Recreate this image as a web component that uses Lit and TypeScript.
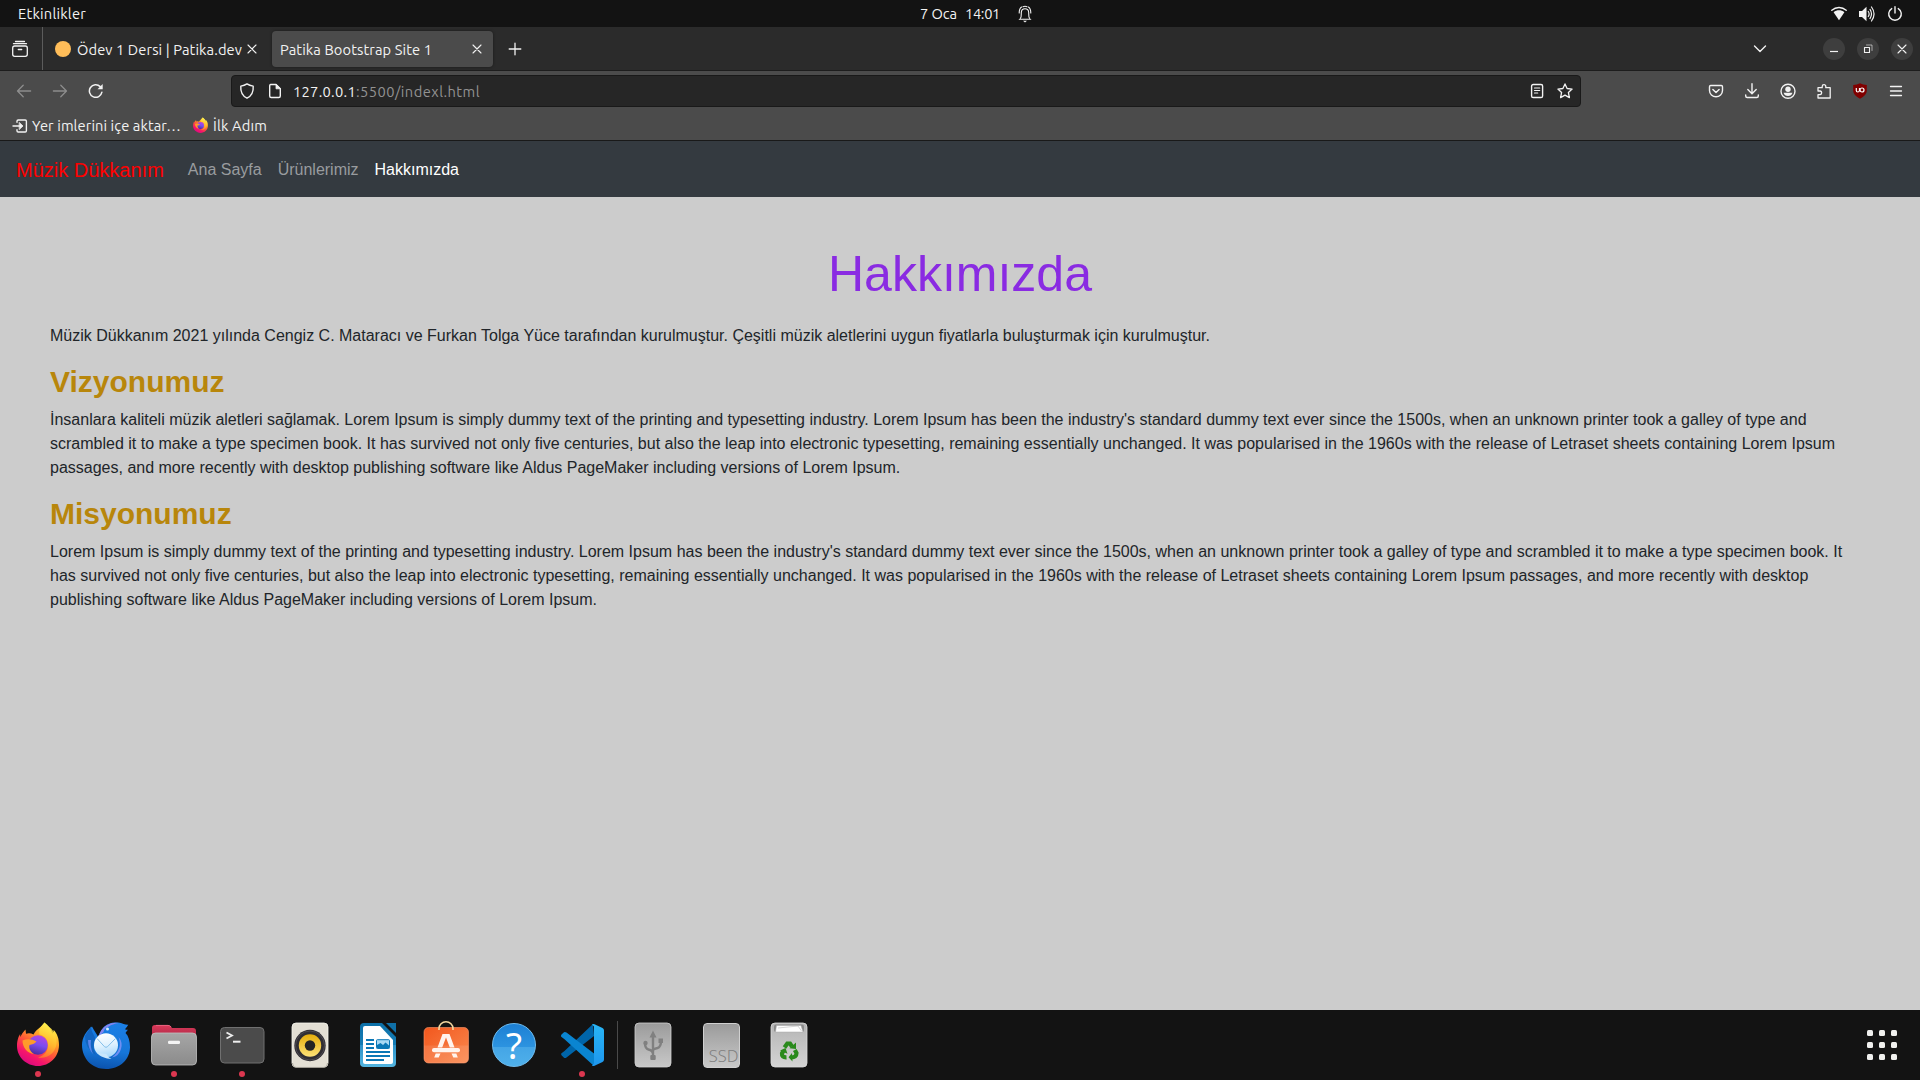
import { LitElement, html, svg, css } from "lit";
import { customElement, property } from "lit/decorators.js";

/* A text label whose tracking is adjusted so that it fills a given width. */
@customElement("fit-label")
class FitLabel extends LitElement {
  @property({ type: Number }) w = 0;
  static styles = css`
    :host { display: inline-block; white-space: pre; flex: none; }
    .t { display: inline-block; }
  `;
  async firstUpdated() {
    await document.fonts.ready;
    const t = this.renderRoot.querySelector(".t") as HTMLElement;
    const n = (this.textContent || "").length;
    const natural = t.getBoundingClientRect().width;
    if (this.w && n) t.style.letterSpacing = (this.w - natural) / n + "px";
  }
  render() { return html`<span class="t"><slot></slot></span>`; }
}

const S = (size: number, body: unknown, vb = "0 0 16 16") =>
  html`<svg width=${size} height=${size} viewBox=${vb} fill="none" stroke="currentColor" stroke-width="1.3" stroke-linecap="round" stroke-linejoin="round">${body}</svg>`;

const I = {
  bell: S(18, svg`<path d="M4.5 13.2C5.5 12 5.2 9.500 5.300 7.500C5.500 4.800 6.800 3.800 9 3.800S12.500 4.800 12.700 7.500C12.800 9.500 12.500 12 13.500 13.200M3.300 14.300H14.700M3.200 8C3.200 5 4 3 5.600 2M14.800 8C14.800 5 14 3 12.400 2M7 1.700Q9 .8 11 1.700" stroke-width="1.1"/><path d="M7 15.700H11L9 17.500Z" fill="currentColor" stroke="none"/>`, "0 0 18 18"),
  wifi: S(16, svg`<path d="M.8 4.300C5 .6 11 .6 15.200 4.300" stroke-width="1.4"/><path d="M2.600 6.300C5.800 3.700 10.200 3.700 13.400 6.300L8 14.300Z" fill="currentColor" stroke="none"/>`),
  volume: S(16, svg`<path d="M0 5H3L7.500 .8V15.200L3 11H0Z" fill="currentColor" stroke="none"/><path d="M9.300 5.500Q11 8 9.300 10.500M11 3.400Q14 8 11 12.600M12.500 1Q17.600 8 12.500 15" stroke-width="1.2"/>`),
  power: S(16, svg`<path d="M4.700 2.600A6.300 6.300 0 1 0 11.300 2.600M8 .8V7" stroke-width="1.4"/>`),
  box: S(18, svg`<rect x="1.700" y="6" width="14.600" height="10.300" rx="2"/><path d="M2.500 3.700H15.500M4.500 1.500H13.500M7.300 9.500H10.700" />`, "0 0 18 18"),
  x: S(10, svg`<path d="M1 1L9 9M9 1L1 9" stroke-width="1.100"/>`, "0 0 10 10"),
  plus: S(14, svg`<path d="M7 1.200V12.800M1.200 7H12.800"/>`, "0 0 14 14"),
  chev: S(14, svg`<path d="M1.500 4L7 9.500L12.500 4" stroke-width="1.400"/>`, "0 0 14 14"),
  min: S(10, svg`<path d="M1 7.500H9" stroke-width="1.200" stroke-linecap="butt"/>`, "0 0 10 10"),
  max: S(10, svg`<rect x="1.500" y="3.500" width="5" height="5" stroke-width="1.100"/><path d="M3.500 1H9V6.500" stroke-width="1" opacity=".6"/>`, "0 0 10 10"),
  back: S(16, svg`<path d="M1.600 8H14.600M7.200 2.300L1.500 8L7.200 13.700"/>`),
  fwd: S(16, svg`<path d="M1.400 8H14.400M8.800 2.300L14.500 8L8.800 13.700"/>`),
  reload: S(16, svg`<path d="M13.900 9.200A6.300 6.300 0 1 1 12.200 3.600" stroke-width="1.500"/><path d="M14.700 1V6.200H9.500Z" fill="currentColor" stroke="none"/>`),
  shield: S(16, svg`<path d="M8 .9Q10.500 2.700 14.200 3.100C14.600 8.500 12.500 13 8 15.200C3.500 13 1.400 8.500 1.800 3.100Q5.500 2.700 8 .9Z" stroke-width="1.400"/>`),
  doc: S(16, svg`<path d="M3.700 1.500H9L13.300 5.800V13Q13.300 14.500 11.800 14.500H4.200Q2.700 14.500 2.700 13V3Q2.700 1.500 3.700 1.500Z" stroke-width="1.400"/><path d="M9 1.500V5.800H13.300Z" fill="currentColor" stroke-width=".8"/>`),
  reader: S(16, svg`<rect x="2.600" y="1.500" width="11" height="13" rx="1.600" stroke-width="1.400"/><path d="M5.500 5H10.700M5.500 7.500H10.700M5.500 10H8.700" stroke-width="1.200"/>`),
  star: S(16, svg`<path d="M8 .9L10.100 5.500L15.100 6.100L11.400 9.500L12.400 14.600L8 12.100L3.600 14.600L4.600 9.500L.9 6.100L5.900 5.500Z" stroke-width="1.300"/>`),
  pocket: S(16, svg`<path d="M2.700 2.500H13.300Q14.500 2.500 14.500 3.700V7.500C14.500 11 11.500 13.700 8 13.700S1.500 11 1.500 7.500V3.700Q1.500 2.500 2.700 2.500Z" stroke-width="1.400"/><path d="M4.900 6.500L8 9.500L11.100 6.500" stroke-width="1.500"/>`),
  down: S(16, svg`<path d="M8 .8V10.500M3.800 6.500L8 10.700L12.200 6.500M1.700 12V13Q1.700 14.500 3.200 14.500H12.800Q14.300 14.500 14.300 13V12" stroke-width="1.400"/>`),
  user: S(16, svg`<circle cx="8" cy="8.300" r="7" stroke-width="1.400"/><circle cx="8" cy="6.200" r="2.700" fill="currentColor" stroke="none"/><path d="M3.600 9.700H12.400Q11.500 13 8 13T3.600 9.700Z" fill="currentColor" stroke="none"/>`),
  puzzle: S(16, svg`<path d="M2 8H4.200A1.900 1.900 0 0 1 4.200 11.700H2V15H14.200V4.700H9.800V3.400A1.800 1.800 0 0 0 6.200 3.400V4.700H2Z" stroke-width="1.300"/>`),
  menu: S(14, svg`<path d="M1.500 2.500H12.500M1.500 7H12.500M1.500 11.500H12.500" stroke-width="1.300"/>`, "0 0 14 14"),
  imp: S(16, svg`<path d="M5 4.300V3.200Q5 2 6.200 2H13.200Q14.400 2 14.400 3.200V12.800Q14.400 14 13.200 14H6.200Q5 14 5 12.800V11.700M1 8H8" stroke-width="1.400"/><path d="M7.500 4.700L11 8L7.500 11.300Z" fill="currentColor" stroke-width=".8"/>`),
};

const ublock = html`<svg width="16" height="16" viewBox="0 0 16 16"><path d="M8 .3Q11 2 14.800 2V8Q14.500 12.500 8 15.700Q1.500 12.500 1.200 8V2Q5 2 8 .3Z" fill="#800000"/><path d="M4.300 5V7.500Q4.300 9 5.800 9T7.500 7.500V5" fill="none" stroke="#fff" stroke-width="1.200"/><circle cx="10" cy="7" r="2" fill="none" stroke="#fff" stroke-width="1.200"/></svg>`;

const firefox = (size: number, id: string) => html`<svg width=${size} height=${size} viewBox="0 0 48 48">
  <defs>
    <linearGradient id="${id}a" x1=".85" y1="0.050" x2=".3" y2="1"><stop offset=".05" stop-color="#fff44f"/><stop offset=".3" stop-color="#ffa928"/><stop offset=".55" stop-color="#ff5a36"/><stop offset=".8" stop-color="#f5156c"/><stop offset="1" stop-color="#d80a80"/></linearGradient>
    <linearGradient id="${id}b" x1=".7" y1="0" x2=".4" y2="1"><stop offset="0" stop-color="#b944e0"/><stop offset=".5" stop-color="#7a4cf0"/><stop offset="1" stop-color="#4b2e9c"/></linearGradient>
    <linearGradient id="${id}c" x1=".6" y1="0" x2=".4" y2="1"><stop offset="0" stop-color="#fff44f"/><stop offset=".6" stop-color="#ffbd2e"/><stop offset="1" stop-color="#ff7a2e"/></linearGradient>
  </defs>
  <path d="M30.500 1.500C34.500 4 37 8 38.300 12.500C39.500 11.500 39.800 10.500 39.500 8.800C43.500 13 45 18 45 24C45 36 35.500 45 24 45S3 36 3 25C3 19 5 14.500 6.200 13L6.300 16C7.500 13.500 9 11 11.500 8.500L12 12.800C14 12 17 12 19.500 13.500C22.500 7.500 27.500 6.500 30.500 1.500Z" fill="url(#${id}a)"/>
  <path d="M30.500 1.500C26.500 5.500 24.500 9 25.500 13.500C31 14.500 34.500 19 34 25C33.500 31 30 34.500 24 36.500C34 38 41 32 42.500 23C43 17 40 10 36.500 7C34 5.500 31.500 4 30.500 1.500Z" fill="url(#${id}c)" opacity=".85"/>
  <circle cx="24" cy="24" r="9.800" fill="url(#${id}b)"/>
  <path d="M8.500 19.500C13 17.500 18 18 22.500 20.500C20.500 23 18 23.500 15.500 24C14.500 27 16.500 31 20 33C13 32.500 8.500 26 8.500 19.500Z" fill="#ff9a2a"/>
</svg>`;

const D = (body: unknown) => html`<svg class="ic" width="48" height="48" viewBox="0 0 48 48">${body}</svg>`;

const thunderbird = D(svg`
  <defs><linearGradient id="tb" x1=".5" y1="0" x2=".4" y2="1"><stop offset="0" stop-color="#1b7fe6"/><stop offset=".6" stop-color="#1676d8"/><stop offset="1" stop-color="#0b52ac"/></linearGradient>
  <linearGradient id="tw" x1=".4" y1="0" x2=".6" y2="1"><stop offset="0" stop-color="#fff"/><stop offset=".5" stop-color="#dff1fe"/><stop offset="1" stop-color="#a6d8fb"/></linearGradient></defs>
  <path d="M10 5.500C4 10 0 17 0 24C0 37 9.500 48 24 48S48 38 48 26C48 20 46.500 15 43.500 12Q45 9.800 46 8.800Q44.500 9 43 8.300Q45 6 46.300 3.800Q44 4 41.500 3C34 0 25 2 21 7C18.500 10.500 17.500 13 16 16C15 13 12 10 10 5.500Z" fill="url(#tb)"/>
  <path d="M3 15L9 5.500C9 12 14 15 13 19Q9.500 26 14 34Q3 28 3 15Z" fill="#1264c0"/>
  <path d="M6 19Q6 28 11 33Q8 26 9 19Z" fill="#5a86ec"/>
  <path d="M16.500 16Q18 8 25 4Q31 .8 37 2Q30 3 27 5.500Q22 7 21.500 11Q19 13 16.500 16Z" fill="#8485f0"/>
  <path d="M36.500 16Q41 28 30 36.500Q37 35 39 28T36.500 16Z" fill="#6f8ff2"/>
  <circle cx="24" cy="24.300" r="12" fill="url(#tw)"/><path d="M15 17.500L22.500 25.700Q24 27 25.500 25.700L33.500 17.500" fill="none" stroke="#83bfea" stroke-width="1"/>
  <path d="M16 32Q20 37.500 29.500 38Q25.500 36 24.500 33Z" fill="#c9e7fd"/><circle cx="25.500" cy="8" r="1.500" fill="#d5efff"/>`);

const files = D(svg`
  <defs><linearGradient id="fg" x1="0" y1="0" x2="0" y2="1"><stop offset="0" stop-color="#a6a6a6"/><stop offset="1" stop-color="#8b8b8b"/></linearGradient><linearGradient id="fr" x1="0" y1="0" x2="0" y2="1"><stop offset="0" stop-color="#dc3a5b"/><stop offset="1" stop-color="#8f1f38"/></linearGradient></defs>
  <path d="M2 22V7Q2 4 5 4H18Q20 4 21 5.500L22 7H43Q46 7 46 10V24Z" fill="url(#fr)"/>
  <path d="M6 4.400H18Q20 4.400 21 6" fill="none" stroke="#ed7089" stroke-width=".8"/>
  <rect x="1.500" y="12" width="45" height="32" rx="4" fill="url(#fg)" stroke="#c2c2c2" stroke-width=".8"/><rect x="18" y="19.800" width="12" height="3.200" rx="1.200" fill="#f3f3f3"/>`);
const terminal = D(svg`<rect x="2.500" y="6.500" width="43.500" height="35.500" rx="4" fill="#4b4b4b" stroke="#707070"/><path d="M8.500 11.500L14 14.500L8.500 17.500" fill="none" stroke="#eee" stroke-width="1.800"/><path d="M15 20.700H22.500" stroke="#eee" stroke-width="2"/>`);
const speaker = D(svg`
  <defs><linearGradient id="sy" x1="0" y1="0" x2="0" y2="1"><stop offset="0" stop-color="#e5ad0b"/><stop offset="1" stop-color="#fde277"/></linearGradient></defs>
  <rect x="6" y="2" width="36" height="44" rx="4" fill="#e3dfd4" stroke="#f7f6ef" stroke-width=".8"/><path d="M6.500 42Q7 46.300 10 46.300H38Q41 46.300 41.500 42" fill="none" stroke="#aaa69b"/>
  <circle cx="24" cy="24.500" r="15.700" fill="#302e33"/><circle cx="24" cy="24.500" r="14.500" fill="none" stroke="#5a5860" stroke-width=".7"/><circle cx="24" cy="24.500" r="11.200" fill="url(#sy)"/><circle cx="24" cy="24.500" r="5.200" fill="#242424"/>`);
const writer = D(svg`
  <defs><linearGradient id="wb" x1="0" y1="0" x2="0" y2="1"><stop offset="0" stop-color="#0c70a8"/><stop offset=".49" stop-color="#167db5"/><stop offset=".5" stop-color="#2b91c8"/><stop offset="1" stop-color="#53b5e0"/></linearGradient></defs>
  <path d="M10 2H28L42 16V42Q42 46 38 46H10Q6 46 6 42V6Q6 2 10 2Z" fill="url(#wb)"/><path d="M11 5H26L39 19V41Q39 43 37 43H11Q9 43 9 41V7Q9 5 11 5Z" fill="#fff"/><path d="M32 2H42V12Z" fill="#0f70a8"/>
  <path d="M12 19H20M12 23H20M12 27H20M12 31H36M12 35H36M12 39H30" stroke="#0a77b5" stroke-width="1.800"/><rect x="22.500" y="18.700" width="13" height="8.800" rx=".8" fill="#a9d9f3" stroke="#0a77b5"/><path d="M23 27V24L26.500 22L29 24L31.500 21.500L35 24.500V27Z" fill="#0a77b5"/>`);
const store = D(svg`
  <defs><linearGradient id="so" x1="0" y1="0" x2="1" y2="1"><stop offset="0" stop-color="#f2571d"/><stop offset="1" stop-color="#fa8a50"/></linearGradient></defs>
  <rect x="2" y="6.500" width="44.500" height="35.500" rx="4.500" fill="url(#so)" stroke="#ff9568" stroke-width=".6"/><path d="M2 24.500H46.500V38Q46.500 42 42 42H6.500Q2 42 2 38Z" fill="#fff" opacity=".1"/>
  <path d="M17 9V7.500A7 6.700 0 0 1 31 7.500V9" fill="none" stroke="#f4d7a0" stroke-width="1.600"/>
  <path d="M20.500 13H27.500L32.500 26.500H27.800L24 16.500L20.200 26.500H15.500Z" fill="#fff4ee"/><rect x="10" y="27" width="28" height="4.300" rx="2" fill="#fff4ee"/><path d="M13.700 32.500H18.500L16.700 36.500H12.200ZM29.500 32.500H34.300L35.800 36.500H31.300Z" fill="#fff4ee"/>`);
const help = html`<div class="help"><span class="q">?</span></div>`;
const vscode = D(svg`
  <defs><linearGradient id="vs" x1="0" y1="0" x2="0" y2="1"><stop offset="0" stop-color="#29b6f6"/><stop offset="1" stop-color="#1e97ee"/></linearGradient></defs>
  <path d="M35 3L6.500 30L3.500 32.300Q2.600 33 3.500 34.300L6 36.800Q7 37.500 8.500 36.500L36 15Z" fill="#0065a9"/>
  <path d="M36 45L6.500 18.300L3.200 15.700Q2.500 14.800 3.500 13.500L6 11.300Q7 10.500 8.500 11.500L38 34Z" fill="#0a85d1"/>
  <path d="M34 3.500Q35 2.500 36.500 3.200L44.500 7Q46 7.800 46 9.500V38.500Q46 40.300 44.500 41L36.500 44.800Q35 45.500 34 44.500L36 42.500V5.500Z" fill="url(#vs)"/>`);
const usb = D(svg`<defs><linearGradient id="gg" x1="0" y1="0" x2="0" y2="1"><stop offset="0" stop-color="#9b9b9b"/><stop offset="1" stop-color="#c8c8c8"/></linearGradient></defs>
  <rect x="6" y="2" width="36" height="44" rx="4" fill="url(#gg)" stroke="#d0d0d0" stroke-width=".8"/>
  <path d="M24 14V36M24 33Q24 29.500 19.500 28.500Q16 27.500 16 22M24 29.500Q24 28 28.500 27Q32 26 32 20" fill="none" stroke="#808080" stroke-width="2.400"/><path d="M20.500 16.500L24 9.500L27.500 16.500Z" fill="#808080"/><circle cx="16.500" cy="22" r="2.200" fill="#808080"/><rect x="29.500" y="17.500" width="4.500" height="4.500" fill="#808080"/><rect x="21.300" y="34" width="5.400" height="5" rx="1" fill="#808080"/>`);
const ssd = html`<div class="ssd"><span class="ssdt">SSD</span></div>`;
const trash = D(svg`
  <defs><linearGradient id="tg" x1="0" y1="0" x2="0" y2="1"><stop offset="0" stop-color="#b4b4b4"/><stop offset="1" stop-color="#d4d4d4"/></linearGradient></defs>
  <rect x="6" y="2" width="36" height="44" rx="4" fill="url(#tg)" stroke="#dcdcdc" stroke-width=".8"/>
  <rect x="9" y="3.500" width="30" height="7.500" rx="2" fill="#8a8a8a"/><path d="M10.500 11L11.500 4.500H36L38 11ZM13 7L33 5L36.500 10" fill="#fff" stroke="#aaa" stroke-width=".5"/>
  <g fill="none" stroke="#2a8a1c" stroke-width="4.200"><path d="M19.500 26.500L22.300 22.500H25L27 25.500"/><path d="M29.800 29L31.500 32Q31.500 36.500 26 36.300"/><path d="M21.500 36.300Q16.500 36.500 17 32.500L18.300 30"/></g>
  <path d="M24.500 27.300L31 28L31 21.500ZM27 32L23.500 36.300L27.500 40.500ZM15 29.500L20.500 27L22.500 32.800Z" fill="#2a8a1c"/>`);

const lorem1 = "İnsanlara kaliteli müzik aletleri sağlamak. Lorem Ipsum is simply dummy text of the printing and typesetting industry. Lorem Ipsum has been the industry's standard dummy text ever since the 1500s, when an unknown printer took a galley of type and scrambled it to make a type specimen book. It has survived not only five centuries, but also the leap into electronic typesetting, remaining essentially unchanged. It was popularised in the 1960s with the release of Letraset sheets containing Lorem Ipsum passages, and more recently with desktop publishing software like Aldus PageMaker including versions of Lorem Ipsum.";
const lorem2 = lorem1.slice(lorem1.indexOf("Lorem"));

@customElement("app-root")
class AppRoot extends LitElement {
  static styles = css`
    :host { display: flex; flex-direction: column; width: 1920px; height: 1080px; overflow: hidden; background: #ccc;
      font-family: Ubuntu, "Noto Sans", "Open Sans", sans-serif; font-size: 14.667px; line-height: 18px; color: #f2f2f2; }
    * { box-sizing: border-box; }
    svg { display: block; flex: none; }
    .top { height: 27px; flex: none; background: #131313; display: grid; grid-template-columns: 1fr auto 1fr; align-items: center; }
    .act { padding-left: 18px; }
    .clock { display: flex; align-items: center; gap: 8px; padding-left: 34px; }
    .clock svg { margin-left: 8px; }
    .tray { display: flex; justify-content: flex-end; gap: 12px; padding-right: 17px; }
    .tabs { height: 44px; flex: none; background: #2b2b2b; border-bottom: 1px solid #1d1d1d; display: flex; align-items: center; }
    .view { width: 43px; height: 43px; border-right: 1px solid #5c5c5c; display: flex; align-items: center; padding-left: 11px; flex: none; }
    .tab { display: flex; align-items: center; height: 36px; border-radius: 4px; flex: none; }
    .t1 { width: 221px; margin-left: 4px; padding-left: 8px; }
    .dot { width: 16px; height: 16px; border-radius: 50%; background: #ffbd59; margin-right: 6px; }
    .t1 svg { margin-left: 5px; }
    .t2 { width: 221px; margin-left: 4px; padding: 0 11px 0 8px; background: #4b4b4b; box-shadow: 0 0 3px rgba(0,0,0,.4); justify-content: space-between; }
    .tab fit-label { padding-top: 2px; }
    .new { margin-left: 15px; }
    .win { margin-left: auto; display: flex; align-items: center; gap: 12px; padding-right: 7px; }
    .win .chev { margin-right: 44px; }
    .wb { width: 22px; height: 22px; border-radius: 50%; background: #3e3e3e; display: flex; align-items: center; justify-content: center; }
    .bar { height: 39px; flex: none; background: #4b4b4b; display: flex; align-items: center; padding: 1px 17px 0 16px; }
    .navi { display: flex; gap: 20px; width: 215px; flex: none; }
    .dim { color: #8d8d8d; }
    .url { width: 1350px; height: 32px; background: #262626; border: 1px solid #191919; border-radius: 4px; display: flex; align-items: center; padding: 0 7px 0 7px; flex: none; }
    .url .doc { margin: 0 10px 0 12px; }
    .url fit-label { padding-top: 1px; }
    .rest { color: #929292; }
    .end { margin-left: auto; display: flex; gap: 12px; }
    .ext { margin-left: auto; display: flex; align-items: center; gap: 20px; }
    .ext svg:not(:last-child) { transform: translateX(-1px); }
    .book { height: 31px; flex: none; background: #4b4b4b; border-bottom: 1px solid #191919; display: flex; align-items: center; padding: 1px 0 0 12px; }
    .book .a { margin-left: 4px; margin-right: 11px; } .book .b { margin-left: 4px; }
    .site { font-family: "Liberation Sans", Arial, sans-serif; font-size: 16px; line-height: 24px; }
    .nav { height: 56px; flex: none; background: #343a40; display: flex; align-items: center; padding: 2px 16px 0; }
    .brand { font-size: 20px; line-height: 30px; color: #f00; margin-right: 16px; }
    .lnk { padding: 8px; color: #999c9f; } .on { color: #fff; }
    .page { flex: 1; padding: 47px 50px 0; color: #212529; min-height: 0; }
    h1 { font-size: 50px; line-height: 60px; margin: 0 0 20px; text-align: center; color: blueviolet; font-weight: 400; }
    h2 { font-size: 30px; line-height: 36px; margin: 0 0 8px; color: darkgoldenrod; font-weight: 700; }
    p { margin: 0 0 16px; }
    .dock { height: 70px; flex: none; background: #131313; display: flex; align-items: flex-start; padding: 0 23px 0 4px; }
    .slot { width: 68px; height: 70px; padding-top: 11px; display: flex; flex-direction: column; align-items: center; flex: none; }
    .run { width: 6px; height: 6px; border-radius: 50%; background: #dc3750; margin-top: 2px; }
    .sep { width: 1px; height: 48px; background: #4a4a4a; margin: 11px 1px 0 1px; flex: none; }
    .help { width: 44px; height: 44px; margin: 2px; border-radius: 50%; background: linear-gradient(#1d80d4, #2c93e0 54%, #44a5e6 55%, #4fb0ea); border: 1px solid #6fbdf0; display: flex; align-items: center; justify-content: center; flex: none; }
    .q { font-family: "Noto Sans", sans-serif; font-size: 37px; line-height: 42px; color: #fff; }
    .ssd { width: 37px; height: 45px; margin: 1.500px; border-radius: 4px; border: 1px solid #d0d0d0; background: linear-gradient(#9b9b9b, #c8c8c8); display: flex; align-items: flex-end; justify-content: flex-end; flex: none; }
    .ssdt { font-family: "Noto Sans", sans-serif; font-weight: 300; font-size: 16.500px; line-height: 22px; color: #808080; }
    .apps { margin: 20px 0 0 auto; display: grid; grid-template-columns: repeat(3, 6px); gap: 6px; }
    .apps i { width: 6px; height: 6px; border-radius: 1.500px; background: #f0f0ee; }
  `;
  render() {
    const dock: [unknown, boolean][] = [[firefox(48, "fx"), true], [thunderbird, false], [files, true], [terminal, true], [speaker, false], [writer, false], [store, false], [help, false], [vscode, true]];
    return html`
      <div class="top">
        <div class="act"><fit-label w="68">Etkinlikler</fit-label></div>
        <div class="clock"><fit-label w="37">7 Oca</fit-label><fit-label w="35">14:01</fit-label>${I.bell}</div>
        <div class="tray">${I.wifi}${I.volume}${I.power}</div>
      </div>
      <div class="tabs">
        <div class="view">${I.box}</div>
        <div class="tab t1"><div class="dot"></div><fit-label w="165">Ödev 1 Dersi | Patika.dev</fit-label>${I.x}</div>
        <div class="tab t2"><fit-label w="152">Patika Bootstrap Site 1</fit-label>${I.x}</div>
        <div class="new">${I.plus}</div>
        <div class="win"><div class="chev">${I.chev}</div><div class="wb">${I.min}</div><div class="wb">${I.max}</div><div class="wb">${I.x}</div></div>
      </div>
      <div class="bar">
        <div class="navi"><span class="dim">${I.back}</span><span class="dim">${I.fwd}</span>${I.reload}</div>
        <div class="url">${I.shield}<span class="doc">${I.doc}</span><fit-label w="63">127.0.0.1</fit-label><fit-label class="rest" w="124">:5500/indexl.html</fit-label><div class="end">${I.reader}${I.star}</div></div>
        <div class="ext">${I.pocket}${I.down}${I.user}${I.puzzle}${ublock}${I.menu}</div>
      </div>
      <div class="book">${I.imp}<fit-label class="a" w="149">Yer imlerini içe aktar…</fit-label>${firefox(17, "fs")}<fit-label class="b" w="54">İlk Adım</fit-label></div>
      <div class="nav site"><span class="brand">Müzik Dükkanım</span><span class="lnk">Ana Sayfa</span><span class="lnk">Ürünlerimiz</span><span class="lnk on">Hakkımızda</span></div>
      <div class="page site">
        <h1>Hakkımızda</h1>
        <p>Müzik Dükkanım 2021 yılında Cengiz C. Mataracı ve Furkan Tolga Yüce tarafından kurulmuştur. Çeşitli müzik aletlerini uygun fiyatlarla buluşturmak için kurulmuştur.</p>
        <h2>Vizyonumuz</h2><p>${lorem1}</p>
        <h2>Misyonumuz</h2><p>${lorem2}</p>
      </div>
      <div class="dock">
        ${dock.map(([ic, run]) => html`<div class="slot">${ic}${run ? html`<div class="run"></div>` : ""}</div>`)}
        <div class="sep"></div>
        <div class="slot">${usb}</div><div class="slot">${ssd}</div><div class="slot">${trash}</div>
        <div class="apps">${Array.from({ length: 9 }, () => html`<i></i>`)}</div>
      </div>`;
  }
}
